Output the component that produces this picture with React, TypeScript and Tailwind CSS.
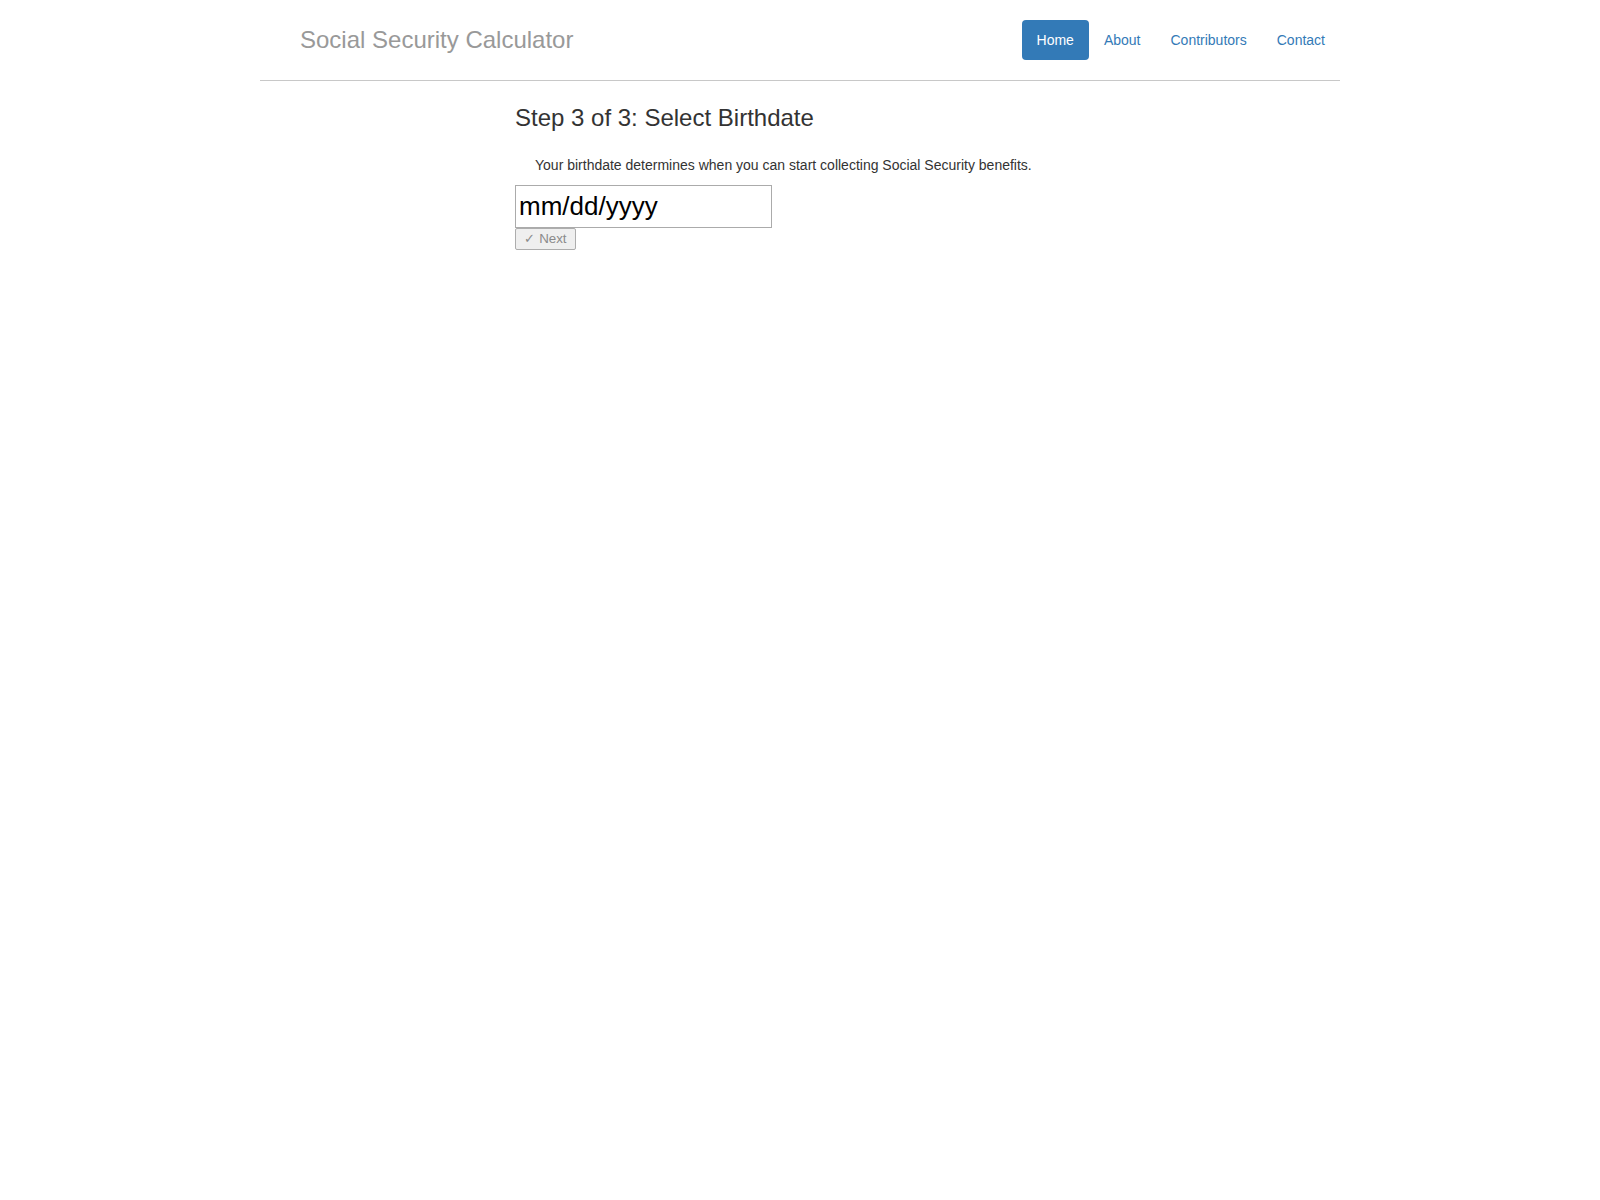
const navItems = ['Home', 'About', 'Contributors', 'Contact'];

function Header() {
  return (
    <div className="flex items-center justify-between border-b border-[#c8c8c8] pt-5 pb-5">
      <h3 className="pl-[40px] text-[24px] leading-[40px] text-[#999]">Social Security Calculator</h3>
      <ul className="flex">
        {navItems.map((item, i) => (
          <li key={item}>
            <a
              href="#"
              className={
                i === 0
                  ? 'block rounded-[4px] bg-[#337ab7] px-[15px] py-[10px] text-[14px] leading-[20px] text-white'
                  : 'block rounded-[4px] px-[15px] py-[10px] text-[14px] leading-[20px] text-[#337ab7]'
              }
            >
              {item}
            </a>
          </li>
        ))}
      </ul>
    </div>
  );
}

export default function App() {
  return (
    <div className="min-h-[1200px] bg-white font-['Liberation_Sans',Arial,sans-serif] text-[#333]">
      <div className="mx-auto w-[1080px]">
        <Header />
        <div className="pl-[255px]">
          <h3 className="mt-[24px] text-[24px] leading-[1.1] text-[#333]">Step 3 of 3: Select Birthdate</h3>
          <p className="mt-[24px] mb-[10px] pl-[20px] text-[14px] leading-[20px] text-[#333]">
            Your birthdate determines when you can start collecting Social Security benefits.
          </p>
          <div className="flex flex-col items-start">
            <input
              type="text"
              placeholder="mm/dd/yyyy"
              className="h-[43px] w-[257px] border border-[#ababab] px-[3px] text-[26px] text-black outline-none placeholder:text-black"
            />
            <button
              type="button"
              disabled
              className="flex h-[22px] w-[61px] items-center justify-center rounded-[2px] border border-[#adadad] bg-[#efefef] text-[13.333px] text-[#8a8a8a]"
            >
              ✓ Next
            </button>
          </div>
        </div>
      </div>
    </div>
  );
}
